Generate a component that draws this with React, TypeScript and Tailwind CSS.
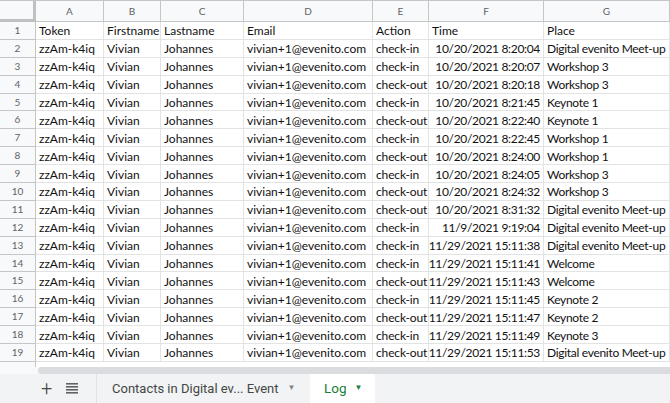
import React from 'react'

const cols = ['A', 'B', 'C', 'D', 'E', 'F', 'G']

const logRows: [string, string, string][] = [
  ['check-in', '10/20/2021 8:20:04', 'Digital evenito Meet-up'],
  ['check-in', '10/20/2021 8:20:07', 'Workshop 3'],
  ['check-out', '10/20/2021 8:20:18', 'Workshop 3'],
  ['check-in', '10/20/2021 8:21:45', 'Keynote 1'],
  ['check-out', '10/20/2021 8:22:40', 'Keynote 1'],
  ['check-in', '10/20/2021 8:22:45', 'Workshop 1'],
  ['check-out', '10/20/2021 8:24:00', 'Workshop 1'],
  ['check-in', '10/20/2021 8:24:05', 'Workshop 3'],
  ['check-out', '10/20/2021 8:24:32', 'Workshop 3'],
  ['check-out', '10/20/2021 8:31:32', 'Digital evenito Meet-up'],
  ['check-in', '11/9/2021 9:19:04', 'Digital evenito Meet-up'],
  ['check-in', '11/29/2021 15:11:38', 'Digital evenito Meet-up'],
  ['check-in', '11/29/2021 15:11:41', 'Welcome'],
  ['check-out', '11/29/2021 15:11:43', 'Welcome'],
  ['check-in', '11/29/2021 15:11:45', 'Keynote 2'],
  ['check-out', '11/29/2021 15:11:47', 'Keynote 2'],
  ['check-in', '11/29/2021 15:11:49', 'Keynote 3'],
  ['check-out', '11/29/2021 15:11:53', 'Digital evenito Meet-up'],
]

const gridCols = 'grid grid-cols-[36px_68px_57px_83px_129px_56px_115px_126px]'

const Cell = ({ children, className = '' }: { children?: React.ReactNode; className?: string }) => (
  <div
    className={
      'flex h-[17.9px] items-end whitespace-nowrap border-r border-b border-[#e2e3e3] px-[3px] pb-[1.5px] leading-none ' +
      className
    }
  >
    {children}
  </div>
)

const RowNum = ({ n }: { n: number }) => (
  <div className="flex h-[17.9px] items-center justify-center border-r border-b border-[#c4c7c5] bg-[#f8f9fa] text-[10px] text-[#5f6368]">
    {n}
  </div>
)

export default function App() {
  return (
    <div className="flex h-[403px] w-[670px] flex-col overflow-hidden bg-white font-['Lato',sans-serif] text-[12px] text-[#111]">
      {/* column header */}
      <div className={gridCols + ' h-[22px] border-t border-[#c4c7c5] bg-[#f8f9fa]'}>
        <div className="border-r-[3px] border-b-[3px] border-[#c0c0c0]" />
        {cols.map((c) => (
          <div
            key={c}
            className="flex items-center justify-center border-r border-b border-[#c4c7c5] text-[10px] text-[#5f6368]"
          >
            {c}
          </div>
        ))}
      </div>

      <div className={gridCols}>
        <RowNum n={1} />
        <Cell>Token</Cell>
        <Cell>Firstname</Cell>
        <Cell>Lastname</Cell>
        <Cell>Email</Cell>
        <Cell>Action</Cell>
        <Cell>Time</Cell>
        <Cell>Place</Cell>
        {logRows.map(([action, time, place], i) => (
          <div key={i} className="contents">
            <RowNum n={i + 2} />
            <Cell>zzAm-k4iq</Cell>
            <Cell>Vivian</Cell>
            <Cell>Johannes</Cell>
            <Cell>vivian+1@evenito.com</Cell>
            <Cell className="tracking-[-0.15px]">{action}</Cell>
            <Cell className="justify-end tracking-[-0.32px]">{time}</Cell>
            <Cell className="tracking-[-0.3px]">{place}</Cell>
          </div>
        ))}
      </div>

      {/* partial row + horizontal scrollbar */}
      <div className="flex h-[5px]">
        <div className="w-[36px] border-r border-[#c4c7c5] bg-[#f8f9fa]" />
        <div className="flex-1" />
      </div>
      <div className="flex h-[7px]">
        <div className="w-[38px] bg-[#f8f9fa]" />
        <div className="flex-1 rounded-l-[3px] bg-[#dadce0]" />
      </div>

      {/* sheet tabs */}
      <div className="flex flex-1 items-stretch bg-[#f1f3f4] font-['Roboto',sans-serif] text-[#444746]">
        <div className="flex w-[97px] items-center gap-[14px] border-r border-[#e1e3e1] pl-[41px]">
          <span className="text-[20px] leading-none font-light">+</span>
          <svg width="12" height="12" viewBox="0 0 12 12" fill="#5f6368">
            <rect x="0" y="1" width="12" height="1.6" />
            <rect x="0" y="4" width="12" height="1.6" />
            <rect x="0" y="7" width="12" height="1.6" />
            <rect x="0" y="10" width="12" height="1.6" />
          </svg>
        </div>
        <div className="flex w-[213px] items-center gap-[9px] pl-[15px] text-[13px]">
          <span>Contacts in Digital ev... Event</span>
          <span className="text-[8px] text-[#80868b]">▼</span>
        </div>
        <div className="flex w-[65px] items-center gap-[8px] bg-white pl-[14px] text-[13.5px] text-[#188038]">
          <span>Log</span>
          <span className="text-[8px]">▼</span>
        </div>
      </div>
    </div>
  )
}
